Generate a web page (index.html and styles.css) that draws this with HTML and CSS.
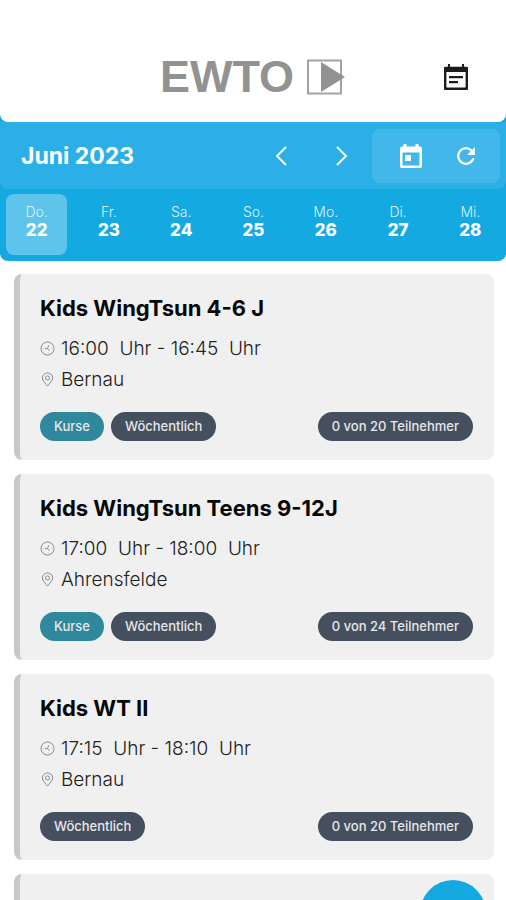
FILE: index.html
```html
<!DOCTYPE html>
<html lang="de">
<head>
<meta charset="utf-8">
<meta name="viewport" content="width=device-width, initial-scale=1">
<title>EWTO Kursplan</title>
<link rel="stylesheet" href="styles.css">
</head>
<body>
<svg class="sprite" aria-hidden="true">
  <symbol id="clock" viewBox="0 0 16 16"><circle cx="8" cy="8" r="7"/><path d="M9.500 4.500 8 8l2 2.500M5.500 8H8M3 8h.5M12.500 8h.5"/></symbol>
  <symbol id="pin" viewBox="0 0 16 16"><path d="M8 15C6 12 2.500 9.500 2.500 6.300a5.500 5.300 0 0 1 11 0C13.500 9.500 10 12 8 15z"/><circle cx="8" cy="6.300" r="2.200"/></symbol>
</svg>
<div class="top">
  <header class="brand">
    <div class="logo">
      <span>EWTO</span>
      <svg viewBox="0 0 38 36" aria-hidden="true"><path d="M1 1.500h33v33H1z" fill="none" stroke="#a3a3a3" stroke-width="2"/><path d="M14 3v30l24-15z" fill="#929292"/></svg>
    </div>
    <button class="agenda" aria-label="Meine Termine">
      <svg viewBox="0 0 24 26" aria-hidden="true"><path d="M1.200 4h21.600v20.800H1.200z" fill="none" stroke="#1b1b1b" stroke-width="2.400" stroke-linejoin="round"/><path d="M1 3h22v5H1zM4 0h2v4H4zM18 0h2v4h-2zM5 12h14v2.200H5zM5 17h9v2.200H5z" fill="#1b1b1b"/></svg>
    </button>
  </header>
  <section class="calendar">
    <div class="month">
      <h1>Juni 2023</h1>
      <button class="arrow" aria-label="Zurück"><svg viewBox="0 0 12 20" aria-hidden="true"><path d="M11 1 2 10l9 9"/></svg></button>
      <button class="arrow" aria-label="Weiter"><svg viewBox="0 0 12 20" aria-hidden="true"><path d="m1 1 9 9-9 9"/></svg></button>
      <div class="tools">
        <button aria-label="Heute"><svg viewBox="0 0 22 24" aria-hidden="true"><path fill-rule="evenodd" d="M3.500 0h3v2.500h9V0h3v2.500H20a2 2 0 0 1 2 2V22a2 2 0 0 1-2 2H2a2 2 0 0 1-2-2V4.500a2 2 0 0 1 2-2h1.500zM2.500 8.500v13h17v-13zM5 11h6v6H5z"/></svg></button>
        <button aria-label="Aktualisieren"><svg viewBox="3 3 18 18" aria-hidden="true"><path d="M17.650 6.350A8 8 0 1 0 19.730 14h-2.080A6 6 0 1 1 12 6c1.660 0 3.140.690 4.220 1.780L13 11h7V4z"/></svg></button>
      </div>
    </div>
    <div class="days">
      <button class="day active">Do.<b>22</b></button>
      <button class="day">Fr.<b>23</b></button>
      <button class="day">Sa.<b>24</b></button>
      <button class="day">So.<b>25</b></button>
      <button class="day">Mo.<b>26</b></button>
      <button class="day">Di.<b>27</b></button>
      <button class="day">Mi.<b>28</b></button>
    </div>
  </section>
</div>
<main class="list">
  <article class="card">
    <h2>Kids WingTsun 4-6 J</h2>
    <p><svg aria-hidden="true"><use href="#clock"/></svg>16:00&nbsp; Uhr - 16:45&nbsp; Uhr</p>
    <p><svg aria-hidden="true"><use href="#pin"/></svg>Bernau</p>
    <div class="tags"><span class="tag course">Kurse</span><span class="tag">Wöchentlich</span><span class="tag seats">0 von 20 Teilnehmer</span></div>
  </article>
  <article class="card">
    <h2>Kids WingTsun Teens 9-12J</h2>
    <p><svg aria-hidden="true"><use href="#clock"/></svg>17:00&nbsp; Uhr - 18:00&nbsp; Uhr</p>
    <p><svg aria-hidden="true"><use href="#pin"/></svg>Ahrensfelde</p>
    <div class="tags"><span class="tag course">Kurse</span><span class="tag">Wöchentlich</span><span class="tag seats">0 von 24 Teilnehmer</span></div>
  </article>
  <article class="card">
    <h2>Kids WT II</h2>
    <p><svg aria-hidden="true"><use href="#clock"/></svg>17:15&nbsp; Uhr - 18:10&nbsp; Uhr</p>
    <p><svg aria-hidden="true"><use href="#pin"/></svg>Bernau</p>
    <div class="tags"><span class="tag">Wöchentlich</span><span class="tag seats">0 von 20 Teilnehmer</span></div>
  </article>
  <article class="card">
    <h2>WT ab</h2>
  </article>
</main>
<button class="fab" aria-label="Hinzufügen"></button>
</body>
</html>
```
FILE: styles.css
```css
* {
  box-sizing: border-box;
}

body {
  margin: 0;
  height: 100vh;
  overflow: hidden;
  background: #fff;
  color: #080808;
  font-family: Inter, "Liberation Sans", sans-serif;
}

button {
  padding: 0;
  border: 0;
  background: none;
  color: inherit;
  font: inherit;
}

svg {
  display: block;
}

.sprite {
  display: none;
}

.top {
  overflow: hidden;
  border-radius: 0 0 8px 8px;
  background: #15a9e2;
}

.brand {
  display: grid;
  grid-template-columns: 1fr auto 1fr;
  align-items: center;
  height: 122px;
  padding: 32px 38px 0 37px;
  border-radius: 0 0 8px 8px;
  background: #fff;
}

.logo {
  display: flex;
  grid-column: 2;
  align-items: center;
  gap: 13px;
  color: #929292;
  font: bold 45px/48px "Liberation Sans", Arial, sans-serif;
}

.logo svg {
  width: 38px;
  height: 36px;
}

.agenda {
  justify-self: end;
}

.agenda svg {
  width: 24px;
  height: 26px;
}

.calendar {
  color: #fff;
}

.month {
  display: flex;
  align-items: center;
  height: 67px;
  padding: 0 6px 0 21px;
  border-radius: 0 0 8px 8px;
  background: #2bafe6;
}

h1 {
  flex: 1;
  margin: 0;
  font-size: 23px;
  font-weight: 700;
}

.arrow {
  display: grid;
  place-items: center;
  width: 61px;
  height: 54px;
}

.arrow svg {
  width: 12px;
  height: 20px;
  fill: none;
  stroke: #fff;
  stroke-width: 2;
}

.tools {
  display: flex;
  align-items: center;
  justify-content: center;
  gap: 34px;
  width: 128px;
  height: 54px;
  padding-left: 4px;
  border-radius: 8px;
  background: #41b8e9;
}

.tools svg {
  height: 24px;
  fill: #fff;
}

.tools button:last-child svg {
  height: 20px;
}

.days {
  display: grid;
  grid-template-columns: repeat(7, 1fr);
  height: 72px;
  padding: 5px 0 6px;
}

.day {
  margin: 0 5px 0 6px;
  padding-bottom: 8px;
  border-radius: 8px;
  color: #d9f1fb;
  font-size: 14px;
  font-weight: 300;
  line-height: 18px;
}

.day b {
  display: block;
  color: #fff;
  font-size: 17px;
  font-weight: 800;
}

.active {
  background: #5fc4ec;
}

.list {
  display: grid;
  gap: 14px;
  padding: 13px 12px 14px 14px;
}

.card {
  height: 186px;
  padding: 20px 21px 20px 20px;
  border-left: 6px solid #c8c8c8;
  border-radius: 8px;
  background: #f0f0f0;
}

h2 {
  margin: 0 0 11px;
  font-size: 22px;
  font-weight: 700;
  line-height: 28px;
}

p {
  display: flex;
  align-items: center;
  gap: 6px;
  margin: 0;
  color: #222;
  font-size: 19px;
  font-weight: 300;
  line-height: 31px;
}

p svg {
  width: 15px;
  height: 15px;
  fill: none;
  stroke: #888;
  stroke-width: 1;
}

.tags {
  display: flex;
  gap: 7px;
  margin-top: 17px;
}

.tag {
  padding: 0 14px;
  border-radius: 15px;
  background: #454f5d;
  color: #e5e7ea;
  font-size: 13px;
  font-weight: 500;
  line-height: 29px;
}

.course {
  background: #2f889b;
}

.seats {
  margin-left: auto;
}

.fab {
  position: fixed;
  right: 20px;
  bottom: -46px;
  width: 66px;
  height: 66px;
  border-radius: 50%;
  background: #15a9e2;
}
```
